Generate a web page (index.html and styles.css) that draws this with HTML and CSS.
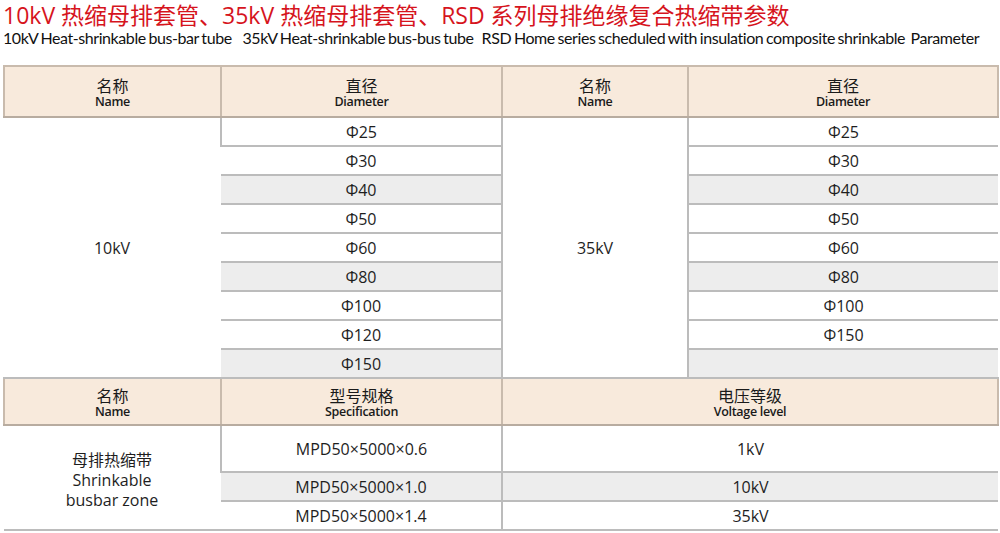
FILE: index.html
```html
<!DOCTYPE html>
<html lang="zh">
<head>
<meta charset="utf-8">
<title>热缩母排套管参数</title>
<link rel="stylesheet" href="styles.css">
</head>
<body>
<div class="page">
  <h1 class="title">10kV 热缩母排套管、35kV 热缩母排套管、RSD 系列母排绝缘复合热缩带参数</h1>
  <p class="subtitle">10kV Heat-shrinkable bus-bar tube&nbsp;&nbsp;&nbsp; 35kV Heat-shrinkable bus-bus tube&nbsp;&nbsp; RSD Home series scheduled with insulation composite shrinkable&nbsp; Parameter</p>
  <table class="spec">
    <colgroup>
      <col class="c1"><col class="c2"><col class="c3"><col class="c4">
    </colgroup>
    <tr class="head">
      <th><span class="zh">名称</span><span class="en">Name</span></th>
      <th><span class="zh">直径</span><span class="en">Diameter</span></th>
      <th><span class="zh">名称</span><span class="en">Name</span></th>
      <th><span class="zh">直径</span><span class="en">Diameter</span></th>
    </tr>
    <tr class="row"><td class="name" rowspan="9">10kV</td><td>Φ25</td><td class="name" rowspan="9">35kV</td><td>Φ25</td></tr>
    <tr class="row"><td>Φ30</td><td>Φ30</td></tr>
    <tr class="row"><td class="gray">Φ40</td><td class="gray">Φ40</td></tr>
    <tr class="row"><td>Φ50</td><td>Φ50</td></tr>
    <tr class="row"><td>Φ60</td><td>Φ60</td></tr>
    <tr class="row"><td class="gray">Φ80</td><td class="gray">Φ80</td></tr>
    <tr class="row"><td>Φ100</td><td>Φ100</td></tr>
    <tr class="row"><td>Φ120</td><td>Φ150</td></tr>
    <tr class="row"><td class="gray">Φ150</td><td class="gray"></td></tr>
    <tr class="head head2">
      <th><span class="zh">名称</span><span class="en">Name</span></th>
      <th><span class="zh">型号规格</span><span class="en">Specification</span></th>
      <th colspan="2"><span class="zh">电压等级</span><span class="en">Voltage level</span></th>
    </tr>
    <tr class="row tall"><td class="name multi" rowspan="3">母排热缩带<br>Shrinkable<br>busbar zone</td><td>MPD50×5000×0.6</td><td colspan="2">1kV</td></tr>
    <tr class="row"><td class="gray">MPD50×5000×1.0</td><td class="gray" colspan="2">10kV</td></tr>
    <tr class="row last"><td>MPD50×5000×1.4</td><td colspan="2">35kV</td></tr>
  </table>
</div>
</body>
</html>
```

FILE: styles.css
```css
html, body {
  margin: 0;
  padding: 0;
  background: #ffffff;
}
body {
  font-family: "Open Sans", "Noto Sans CJK SC", sans-serif;
  color: #1e1e1e;
}
.page {
  width: 1000px;
  height: 533px;
  overflow: hidden;
}
.title {
  margin: 0;
  padding: 2px 0 0 3px;
  height: 27px;
  font-family: "Open Sans", "Noto Sans CJK SC", sans-serif;
  font-weight: 400;
  font-size: 23px;
  line-height: 27px;
  color: #d6141d;
  white-space: nowrap;
}
.subtitle {
  margin: 0;
  padding: 0 0 0 3px;
  height: 36px;
  font-family: "Lato", sans-serif;
  font-size: 16px;
  line-height: 18px;
  letter-spacing: -0.42px;
  word-spacing: -1px;
  color: #111;
  white-space: nowrap;
}
.spec {
  margin-left: 3px;
  width: 994px;
  border-collapse: collapse;
  table-layout: fixed;
}
.c1 { width: 217px; }
.c2 { width: 281px; }
.c3 { width: 186px; }
.c4 { width: 310px; }
.spec th {
  background: #f8eadc;
  border: 2px solid #c9bbad;
  border-bottom-color: #b8aca0;
  font-weight: 400;
  text-align: center;
  vertical-align: middle;
  padding: 0;
  height: 49px;
}
.head2 th { height: 45px; }
.zh {
  display: block;
  font-family: "Noto Sans CJK SC", sans-serif;
  font-size: 16px;
  line-height: 20px;
  color: #1a1a1a;
}
.en {
  display: block;
  font-family: "Open Sans", sans-serif;
  font-weight: 600;
  font-size: 12.5px;
  line-height: 14px;
  letter-spacing: -0.3px;
  color: #1a1a1a;
}
.spec td {
  border-top: 2px solid #bcbcbc;
  border-bottom: 2px solid #bcbcbc;
  border-left: 2px solid #bcbcbc;
  text-align: center;
  vertical-align: middle;
  padding: 0;
  height: 27px;
  font-size: 16px;
  line-height: 20px;
  color: #1e1e1e;
}
.spec tr td:first-child { border-left: none; }
.spec td.gray { background: #ededed; }
.spec tr.tall td { height: 45px; }
.spec td.name { background: #ffffff; }
.spec td.multi { line-height: 20px; padding-top: 4px; }
```
